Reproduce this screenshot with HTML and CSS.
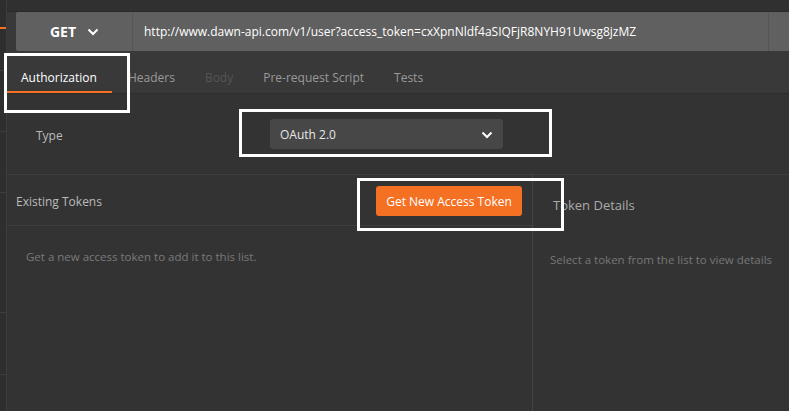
FILE: index.html
```html
<!DOCTYPE html>
<html>
<head>
<meta charset="utf-8">
<link rel="stylesheet" href="styles.css">
</head>
<body>
<div class="app">
  <aside class="sidebar">
    <div class="side-item s1"><span class="side-mark"></span></div>
    <div class="side-item s2"></div>
    <div class="side-item s3"></div>
    <div class="side-item s4"></div>
    <div class="side-item s5"></div>
  </aside>
  <main class="main">
    <div class="topstrip"></div>
    <div class="urlrow">
      <div class="urlbar">
        <div class="method">GET
          <svg class="chev" width="12" height="8" viewBox="0 0 12 8"><path d="M1.5 1.5 L6 6 L10.5 1.5" fill="none" stroke="#fff" stroke-width="2"/></svg>
        </div>
        <div class="url">http://www.dawn-api.com/v1/user?access_token=cxXpnNldf4aSIQFjR8NYH91Uwsg8jzMZ</div>
        <div class="params"></div>
      </div>
    </div>
    <nav class="tabs">
      <div class="tab active">Authorization</div>
      <div class="tab">Headers</div>
      <div class="tab disabled">Body</div>
      <div class="tab">Pre-request Script</div>
      <div class="tab">Tests</div>
    </nav>
    <div class="typerow">
      <div class="type-label">Type</div>
      <div class="select">
        <span>OAuth 2.0</span>
        <svg class="chev" width="12" height="8" viewBox="0 0 12 8"><path d="M1.5 1.5 L6 6 L10.5 1.5" fill="none" stroke="#fff" stroke-width="2"/></svg>
      </div>
    </div>
    <div class="tokens">
      <section class="tokens-left">
        <div class="tokens-head">
          <div class="tokens-title">Existing Tokens</div>
          <button class="btn">Get New Access Token</button>
        </div>
        <div class="empty">Get a new access token to add it to this list.</div>
      </section>
      <section class="tokens-right">
        <div class="details-title">Token Details</div>
        <div class="details-empty">Select a token from the list to view details</div>
      </section>
    </div>
  </main>
</div>
<div class="mark m1"></div>
<div class="mark m2"></div>
<div class="mark m3"></div>
</body>
</html>
```
FILE: styles.css
```css
* { box-sizing: border-box; }
html, body { margin: 0; padding: 0; }
body {
  width: 789px;
  height: 411px;
  overflow: hidden;
  background: #333333;
  font-family: "Open Sans", "Noto Sans", sans-serif;
  font-size: 12px;
  color: #ccc;
  position: relative;
}
.app { display: flex; height: 411px; }
.sidebar {
  width: 7px;
  background: #2e2e2e;
  border-right: 1px solid #3c3c3c;
  display: flex;
  flex-direction: column;
}
.side-item { border-bottom: 1px solid #3e3e3e; position: relative; }
.s1 { height: 71px; }
.s2 { height: 61px; }
.s3 { height: 61px; }
.s4 { height: 120px; }
.s5 { height: 62px; }
.side-mark { position: absolute; left: 0; top: 27px; width: 6px; height: 2px; background: #f47023; }
.main { flex: 1; display: flex; flex-direction: column; min-width: 0; }
.topstrip { height: 12px; background: #303030; border-bottom: 1px solid #2a2a2a; }
.urlrow { background: #393939; padding: 0 0 0 9px; }
.urlbar { display: flex; height: 39px; background: #606060; border-radius: 2px 0 0 2px; }
.method {
  width: 117px;
  border-right: 1px solid #555;
  display: flex; align-items: center; justify-content: center; gap: 11px;
  font-weight: bold; font-size: 14px; color: #fff;
  padding-left: 1px;
}
.url { flex: 1; display: flex; align-items: center; padding-left: 11px; color: #fff; font-size: 12px; white-space: nowrap; overflow: hidden; }
.params { width: 21px; border-left: 1px solid #555; }
.tabs {
  display: flex; height: 43px; align-items: stretch;
  background: #393939; border-bottom: 1px solid #2c2c2c;
}
.tab { color: #9a9a9a; font-size: 12px; display: flex; align-items: center; padding: 11px 15px 0; }
.tab.active { color: #fff; border-bottom: 2px solid #f47023; padding: 13px 15px 0 14px; margin-right: 1px; }
.tab.disabled { color: #555; }
.typerow {
  height: 81px; display: flex; align-items: center;
  border-bottom: 1px solid #3f3f3f;
}
.type-label { width: 263px; padding-left: 29px; color: #bbb; font-size: 12px; padding-top: 3px; }
.select {
  width: 233px; height: 30px; background: #474747; border-radius: 3px;
  display: flex; align-items: center; justify-content: space-between;
  padding: 1px 10px 0; color: #e6e6e6; font-size: 12px;
}
.tokens { flex: 1; display: flex; }
.tokens-left { width: 526px; border-right: 1px solid #444; }
.tokens-head {
  height: 51px; display: flex; align-items: center; justify-content: space-between;
  border-bottom: 1px solid #3f3f3f; padding: 2px 10px 0 9px;
}
.tokens-title { color: #bbb; font-size: 12px; }
.btn {
  background: #f47023; color: #fff; border: 0; border-radius: 3px;
  font-family: inherit; font-size: 12px; height: 30px; width: 146px; padding: 0;
}
.empty { color: #7a7a7a; font-size: 11.5px; padding: 23px 0 0 19px; }
.tokens-right { flex: 1; padding: 21px 0 0 17px; }
.details-title { color: #aaa; font-size: 13px; padding-left: 3px; }
.details-empty { color: #777; font-size: 11.5px; margin-top: 38px; }
.mark { position: absolute; border: 3px solid #fff; }
.m1 { left: 4px; top: 53px; width: 126px; height: 60px; }
.m2 { left: 239px; top: 109px; width: 313px; height: 48px; }
.m3 { left: 357px; top: 178px; width: 207px; height: 53px; }
```
